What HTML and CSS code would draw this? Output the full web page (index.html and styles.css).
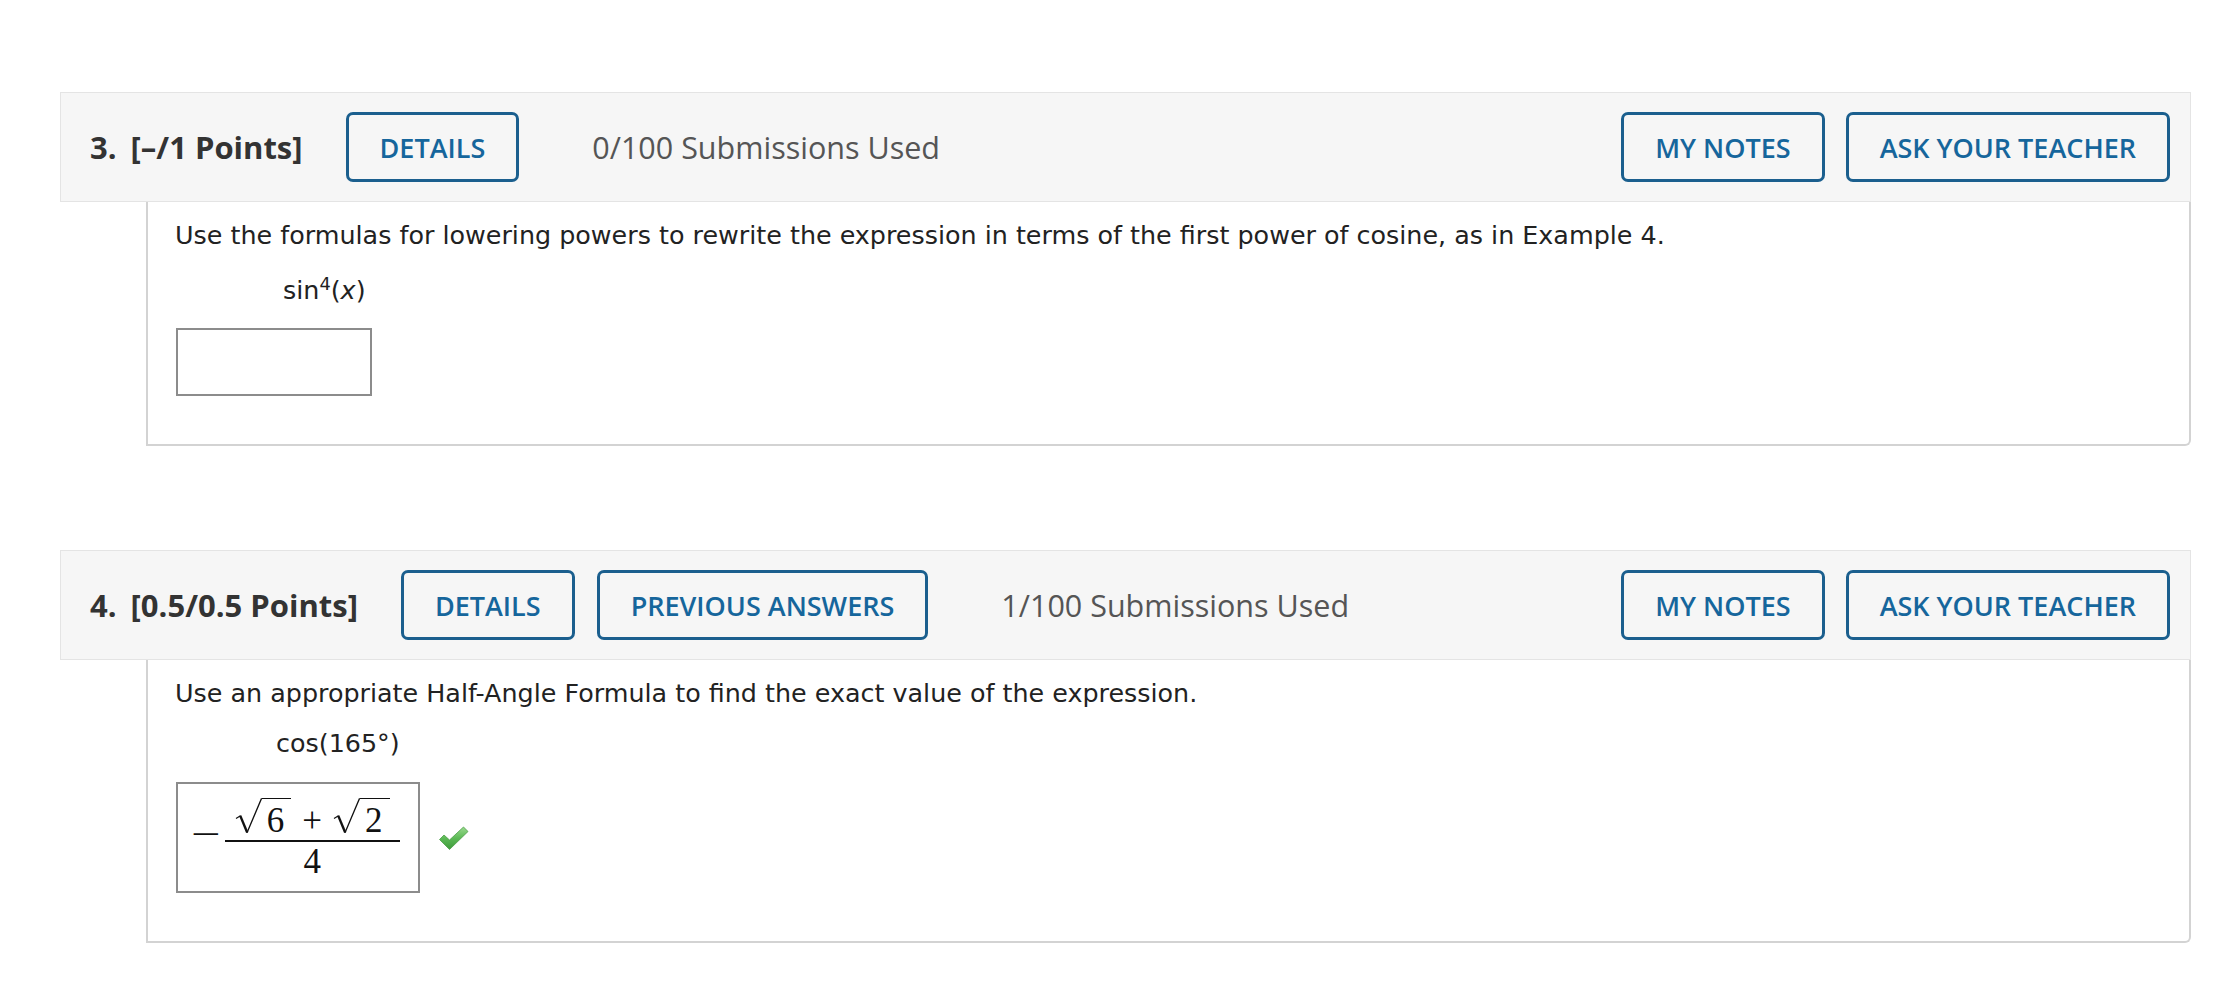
FILE: index.html
```html
<!DOCTYPE html>
<html lang="en">
<head>
<meta charset="utf-8">
<title>Questions</title>
<link rel="stylesheet" href="styles.css">
</head>
<body>
<div class="page">
  <section class="question">
    <div class="qhead">
      <span class="qnum">3.</span>
      <span class="qpts">[–/1 Points]</span>
      <span class="btn btn-first">DETAILS</span>
      <span class="subs">0/100 Submissions Used</span>
      <div class="actions">
        <span class="btn">MY NOTES</span>
        <span class="btn">ASK YOUR TEACHER</span>
      </div>
    </div>
    <div class="qbody">
      <p class="prompt">Use the formulas for lowering powers to rewrite the expression in terms of the first power of cosine, as in Example 4.</p>
      <p class="expr expr-sin">sin<sup>4</sup>(<i>x</i>)</p>
      <div class="answer-row">
        <div class="answer-box empty"></div>
      </div>
    </div>
  </section>

  <section class="question q4">
    <div class="qhead">
      <span class="qnum">4.</span>
      <span class="qpts">[0.5/0.5 Points]</span>
      <span class="btn btn-first">DETAILS</span>
      <span class="btn btn-next">PREVIOUS ANSWERS</span>
      <span class="subs">1/100 Submissions Used</span>
      <div class="actions">
        <span class="btn">MY NOTES</span>
        <span class="btn">ASK YOUR TEACHER</span>
      </div>
    </div>
    <div class="qbody">
      <p class="prompt">Use an appropriate Half-Angle Formula to find the exact value of the expression.</p>
      <p class="expr expr-cos">cos(165°)</p>
      <div class="answer-row answer-row-math">
        <div class="answer-box filled">
          <span class="math">
            <span class="minus">−</span>
            <span class="frac">
              <span class="num">
                <span class="sqrt"><svg class="rad" viewBox="0 0 27 36"><path d="M1 20.5 L5.5 17.8" fill="none" stroke="#111" stroke-width="1.3"/><path d="M5.2 17.6 L12.2 34.5" fill="none" stroke="#111" stroke-width="2.4"/><path d="M12 34.8 L26.3 0.9 L27 0.9" fill="none" stroke="#111" stroke-width="1.3"/></svg><span class="radicand">6</span></span>
                <span class="plus">+</span>
                <span class="sqrt"><svg class="rad" viewBox="0 0 27 36"><path d="M1 20.5 L5.5 17.8" fill="none" stroke="#111" stroke-width="1.3"/><path d="M5.2 17.6 L12.2 34.5" fill="none" stroke="#111" stroke-width="2.4"/><path d="M12 34.8 L26.3 0.9 L27 0.9" fill="none" stroke="#111" stroke-width="1.3"/></svg><span class="radicand">2</span></span>
              </span>
              <span class="den">4</span>
            </span>
          </span>
        </div>
        <svg class="check" viewBox="0 0 32 28" width="32" height="28" aria-label="correct">
          <defs>
            <linearGradient id="g" x1="0" y1="0" x2="0" y2="1">
              <stop offset="0" stop-color="#9ada8e"/>
              <stop offset="0.5" stop-color="#5cb955"/>
              <stop offset="1" stop-color="#3e9a3c"/>
            </linearGradient>
          </defs>
          <path d="M1.5 15.5 L6 11 L11.5 16 L25.5 3 L30 7.5 L11.5 25.5 Z" fill="url(#g)" stroke="#4a9e45" stroke-width="0.8" stroke-linejoin="round"/>
        </svg>
      </div>
    </div>
  </section>
</div>
</body>
</html>
```

FILE: styles.css
```css
* { box-sizing: border-box; }

html, body {
  margin: 0;
  padding: 0;
  background: #ffffff;
}

.page {
  padding-top: 92px;
  width: 2224px;
}

.question {
  margin: 0 33px 0 60px;
}

.q4 {
  margin-top: 104px;
}

.qhead {
  display: flex;
  align-items: center;
  height: 110px;
  padding: 0 20px 0 29px;
  background: #f6f6f6;
  border: 1px solid #e4e4e4;
  font-family: "Open Sans", "Liberation Sans", sans-serif;
}

.qnum,
.qpts {
  font-weight: 700;
  font-size: 31px;
  color: #333333;
}

.qpts {
  margin-left: 14px;
}

.btn {
  display: inline-flex;
  align-items: center;
  justify-content: center;
  height: 70px;
  padding: 0 31px;
  border: 3px solid #1b5f8e;
  border-radius: 7px;
  color: #16669c;
  font-weight: 600;
  font-size: 27px;
  background: #f6f6f6;
  white-space: nowrap;
}

.btn-first {
  margin-left: 43px;
}

.btn-next {
  margin-left: 22px;
}

.subs {
  margin-left: 73px;
  font-size: 30.5px;
  color: #555555;
}

.actions {
  margin-left: auto;
  display: flex;
  gap: 21px;
}

.qbody {
  margin-left: 86px;
  padding: 17px 0 48px 27px;
  border: 2px solid #d3d3d3;
  border-top: none;
  border-bottom-right-radius: 6px;
  font-family: "DejaVu Sans", Verdana, sans-serif;
  font-size: 25.4px;
  color: #222222;
}

.prompt {
  margin: 0;
  line-height: 33px;
}

.expr {
  margin: 22px 0 0;
  line-height: 33px;
}

.expr-sin {
  padding-left: 108px;
}

.expr-cos {
  margin-top: 17px;
  padding-left: 101px;
}

.expr sup {
  font-size: 0.7em;
  line-height: 0;
}

.answer-row {
  display: flex;
  align-items: center;
  margin-top: 21px;
  margin-left: 1px;
}

.answer-row-math {
  margin-top: 22px;
}

.answer-box {
  border: 2px solid #8c8c8c;
  background: #ffffff;
}

.answer-box.empty {
  width: 196px;
  height: 68px;
}

.answer-box.filled {
  width: 244px;
  height: 111px;
  display: flex;
  align-items: center;
  padding-left: 18px;
}

.math {
  display: inline-flex;
  align-items: center;
  font-family: "Liberation Serif", "DejaVu Serif", serif;
  font-size: 35px;
  color: #111111;
}

.minus {
  display: inline-block;
  margin-right: 9px;
  margin-bottom: 6px;
  line-height: 1;
  transform: scaleX(1.5);
}

.frac {
  display: inline-flex;
  flex-direction: column;
  align-items: center;
}

.num {
  display: flex;
  align-items: flex-end;
  padding: 0 10px 3px 10px;
  border-bottom: 2px solid #111111;
}

.sqrt {
  display: inline-flex;
  align-items: flex-start;
}

.rad {
  width: 27px;
  height: 36px;
  display: block;
}

.radicand {
  border-top: 1.5px solid #111111;
  padding: 5px 7px 0 5px;
  line-height: 33px;
}

.plus {
  line-height: 33px;
  margin: 0 11px;
}

.den {
  line-height: 33px;
  margin-top: 3px;
}

.check {
  margin-left: 18px;
  display: block;
}
```
